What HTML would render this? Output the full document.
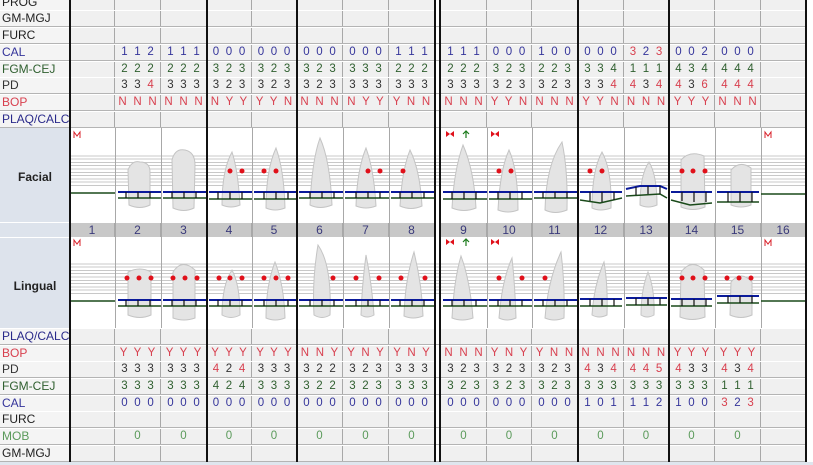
<!DOCTYPE html>
<html><head><meta charset="utf-8"><style>
*{margin:0;padding:0;box-sizing:border-box}
body{width:813px;height:465px;background:#fff;position:relative;overflow:hidden;font-family:"Liberation Sans",sans-serif;font-size:11.5px}
.r{position:absolute;left:0;width:806px;height:17px;display:flex;border-bottom:1px solid #b4b4b4;border-top:1px solid #fff}
.r>span{height:100%;background:#f0f0f0;border-right:1px solid #a8a8a8;display:block;text-align:center;white-space:pre;word-spacing:3.5px;line-height:15px}
.r>span:nth-child(1){width:70px;background:#f4f4f4;text-align:left;padding-left:2px;font-size:12px;border-right:none;word-spacing:0;overflow:visible}
.r>span:nth-child(2),.r>span:nth-child(5),.r>span:nth-child(6),.r>span:nth-child(12),.r>span:nth-child(15),.r>span:nth-child(18){width:45px}
.r>span:nth-child(3),.r>span:nth-child(4),.r>span:nth-child(7),.r>span:nth-child(8),.r>span:nth-child(9),.r>span:nth-child(11),.r>span:nth-child(13),.r>span:nth-child(14),.r>span:nth-child(16),.r>span:nth-child(17){width:46px}
.r>span:nth-child(10){width:6px;padding:0;background:#fff;border:none}
.b{color:#34349a}.g{color:#2f5f2f}.k{color:#333}.rd{color:#d8404f}.lg{color:#5a9a5a}
b{font-weight:normal}
.vl{position:absolute;top:0;height:462px;width:2px;background:#111}
.tl{position:absolute;top:0;height:462px;width:1px;background:#a8a8a8}
.n>span:not(:first-child):not(:nth-child(10)){background:#c8c8c8;color:#3a3a7a;font-size:12px}
</style></head><body>
<div style="position:absolute;left:0;top:128px;width:70px;height:200px;background:#dde3ec"></div>
<div style="position:absolute;left:0;top:163px;width:70px;text-align:center;font-weight:bold;font-size:12px;color:#222;line-height:28px">Facial</div>
<div style="position:absolute;left:0;top:272px;width:70px;text-align:center;font-weight:bold;font-size:12px;color:#222;line-height:28px">Lingual</div>
<div style="position:absolute;left:70px;top:153px;width:736px;height:35px;background:repeating-linear-gradient(#fff 0,#fff 2.3px,#c8c8c8 2.3px,#c8c8c8 3.3px)"></div>
<div style="position:absolute;left:70px;top:261px;width:736px;height:35px;background:repeating-linear-gradient(#fff 0,#fff 2.3px,#c8c8c8 2.3px,#c8c8c8 3.3px)"></div>
<div class="r n" style="top:222px;height:16px;border-color:#fff"><span style="background:#dde3ec"></span><span>1</span><span>2</span><span>3</span><span>4</span><span>5</span><span>6</span><span>7</span><span>8</span><span></span><span>9</span><span>10</span><span>11</span><span>12</span><span>13</span><span>14</span><span>15</span><span>16</span></div>

<div class="r" style="top:-6px"><span style="color:#222">PROG</span><span></span><span></span><span></span><span></span><span></span><span></span><span></span><span></span><span></span><span></span><span></span><span></span><span></span><span></span><span></span><span></span><span></span></div>
<div class="r" style="top:10px"><span style="color:#222">GM-MGJ</span><span></span><span></span><span></span><span></span><span></span><span></span><span></span><span></span><span></span><span></span><span></span><span></span><span></span><span></span><span></span><span></span><span></span></div>
<div class="r" style="top:27px"><span style="color:#222">FURC</span><span></span><span></span><span></span><span></span><span></span><span></span><span></span><span></span><span></span><span></span><span></span><span></span><span></span><span></span><span></span><span></span><span></span></div>
<div class="r b" style="top:44px"><span>CAL</span><span></span><span>1 1 2</span><span>1 1 1</span><span>0 0 0</span><span>0 0 0</span><span>0 0 0</span><span>0 0 0</span><span>1 1 1</span><span></span><span>1 1 1</span><span>0 0 0</span><span>1 0 0</span><span>0 0 0</span><span><b class="rd">3</b> 2 <b class="rd">3</b></span><span>0 0 2</span><span>0 0 0</span><span></span></div>
<div class="r g" style="top:61px"><span>FGM-CEJ</span><span></span><span>2 2 2</span><span>2 2 2</span><span>3 2 3</span><span>3 2 3</span><span>3 2 3</span><span>3 3 3</span><span>2 2 2</span><span></span><span>2 2 2</span><span>3 2 3</span><span>2 2 3</span><span>3 3 4</span><span>1 1 1</span><span>4 3 4</span><span>4 4 4</span><span></span></div>
<div class="r k" style="top:77px"><span>PD</span><span></span><span>3 3 <b class="rd">4</b></span><span>3 3 3</span><span>3 2 3</span><span>3 2 3</span><span>3 2 3</span><span>3 3 3</span><span>3 3 3</span><span></span><span>3 3 3</span><span>3 2 3</span><span>3 2 3</span><span>3 3 <b class="rd">4</b></span><span class="rd">4 <b class="k">3</b> 4</span><span class="rd">4 <b class="k">3</b> 6</span><span class="rd">4 4 4</span><span></span></div>
<div class="r rd" style="top:94px"><span>BOP</span><span></span><span>N N N</span><span>N N N</span><span>N Y Y</span><span>Y Y N</span><span>N N N</span><span>N Y Y</span><span>Y N N</span><span></span><span>N N N</span><span>Y Y N</span><span>N N N</span><span>Y Y N</span><span>N N N</span><span>Y Y Y</span><span>N N N</span><span></span></div>
<div class="r" style="top:111px;color:#2a2a8a"><span>PLAQ/CALC</span><span></span><span></span><span></span><span></span><span></span><span></span><span></span><span></span><span></span><span></span><span></span><span></span><span></span><span></span><span></span><span></span><span></span></div>

<div class="r" style="top:328px;color:#2a2a8a"><span>PLAQ/CALC</span><span></span><span></span><span></span><span></span><span></span><span></span><span></span><span></span><span></span><span></span><span></span><span></span><span></span><span></span><span></span><span></span><span></span></div>
<div class="r rd" style="top:345px"><span>BOP</span><span></span><span>Y Y Y</span><span>Y Y Y</span><span>Y Y Y</span><span>Y Y Y</span><span>N N Y</span><span>Y N Y</span><span>Y N Y</span><span></span><span>N N N</span><span>Y N Y</span><span>Y N N</span><span>N N N</span><span>N N N</span><span>Y Y Y</span><span>Y Y Y</span><span></span></div>
<div class="r k" style="top:361px"><span>PD</span><span></span><span>3 3 3</span><span>3 3 3</span><span><b class="rd">4</b> 2 <b class="rd">4</b></span><span>3 3 3</span><span>3 2 2</span><span>3 2 3</span><span>3 3 3</span><span></span><span>3 2 3</span><span>3 2 3</span><span>3 2 3</span><span class="rd">4 <b class="k">3</b> 4</span><span class="rd">4 4 5</span><span><b class="rd">4</b> 3 3</span><span class="rd">4 <b class="k">3</b> 4</span><span></span></div>
<div class="r g" style="top:378px"><span>FGM-CEJ</span><span></span><span>3 3 3</span><span>3 3 3</span><span>4 2 4</span><span>3 3 3</span><span>3 2 2</span><span>3 2 3</span><span>3 3 3</span><span></span><span>3 2 3</span><span>3 2 3</span><span>3 2 3</span><span>3 3 3</span><span>3 3 3</span><span>3 3 3</span><span>1 1 1</span><span></span></div>
<div class="r b" style="top:395px"><span>CAL</span><span></span><span>0 0 0</span><span>0 0 0</span><span>0 0 0</span><span>0 0 0</span><span>0 0 0</span><span>0 0 0</span><span>0 0 0</span><span></span><span>0 0 0</span><span>0 0 0</span><span>0 0 0</span><span>1 0 1</span><span>1 1 2</span><span>1 0 0</span><span><b class="rd">3</b> 2 <b class="rd">3</b></span><span></span></div>
<div class="r" style="top:411px"><span style="color:#222">FURC</span><span></span><span></span><span></span><span></span><span></span><span></span><span></span><span></span><span></span><span></span><span></span><span></span><span></span><span></span><span></span><span></span><span></span></div>
<div class="r lg" style="top:428px"><span>MOB</span><span></span><span>0</span><span>0</span><span>0</span><span>0</span><span>0</span><span>0</span><span>0</span><span></span><span>0</span><span>0</span><span>0</span><span>0</span><span>0</span><span>0</span><span>0</span><span></span></div>
<div class="r" style="top:445px"><span style="color:#222">GM-MGJ</span><span></span><span></span><span></span><span></span><span></span><span></span><span></span><span></span><span></span><span></span><span></span><span></span><span></span><span></span><span></span><span></span><span></span></div>
<div style="position:absolute;left:0;top:462px;width:813px;height:3px;background:#dfe6ee"></div>

<div style="position:absolute;top:128px;left:0;width:813px;height:200px;pointer-events:none">
<div class="tl" style="left:115px;height:200px"></div><div class="tl" style="left:161px;height:200px"></div><div class="tl" style="left:252px;height:200px"></div><div class="tl" style="left:343px;height:200px"></div><div class="tl" style="left:389px;height:200px"></div><div class="tl" style="left:487px;height:200px"></div><div class="tl" style="left:532px;height:200px"></div><div class="tl" style="left:624px;height:200px"></div><div class="tl" style="left:715px;height:200px"></div><div class="tl" style="left:761px;height:200px"></div>
</div>

<svg width="813" height="465" style="position:absolute;left:0;top:0">
<g fill="#e4e4e4" stroke="#c4c4c4" stroke-width="1">
<path d="M129 205 L128 170 Q132 160 140 162 Q150 162 150 172 L150 205 Q140 210 129 205Z"/>
<path d="M173 208 L172 160 Q175 148 185 150 Q195 152 195 165 L194 208 Q184 213 173 208Z"/>
<path d="M222 205 Q222 170 232 152 Q238 170 240 205 Q231 209 222 205Z"/>
<path d="M266 208 Q266 170 276 148 Q284 170 285 208 Q275 212 266 208Z"/>
<path d="M310 205 Q312 160 320 138 Q330 160 332 205 Q320 210 310 205Z"/>
<path d="M356 206 Q357 170 366 148 Q374 170 376 206 Q366 210 356 206Z"/>
<path d="M400 206 Q402 170 410 150 Q420 170 422 206 Q411 211 400 206Z"/>
<path d="M452 208 Q454 170 463 145 Q474 170 476 208 Q464 213 452 208Z"/>
<path d="M498 210 Q500 170 509 150 Q518 170 518 210 Q508 214 498 210Z"/>
<path d="M545 210 Q546 165 562 142 Q568 170 567 210 Q555 215 545 210Z"/>
<path d="M592 208 Q592 170 602 152 Q612 170 611 208 Q600 212 592 208Z"/>
<path d="M640 205 Q640 175 649 162 Q657 175 657 205 Q648 209 640 205Z"/>
<path d="M681 207 L681 160 Q690 150 704 156 L705 207 Q693 212 681 207Z"/>
<path d="M731 205 L731 170 Q740 160 751 168 L751 205 Q741 209 731 205Z"/>
<path d="M128 315 L128 272 Q140 266 151 272 L151 315 Q140 320 128 315Z"/>
<path d="M173 318 L173 272 Q182 258 195 270 L195 318 Q184 322 173 318Z"/>
<path d="M222 315 Q222 285 232 270 Q240 285 240 315 Q231 320 222 315Z"/>
<path d="M266 318 Q266 285 275 262 Q284 285 285 318 Q275 322 266 318Z"/>
<path d="M314 315 Q312 280 318 245 Q332 265 330 315 Q322 320 314 315Z"/>
<path d="M361 315 Q362 285 366 255 Q372 285 374 315 Q367 319 361 315Z"/>
<path d="M404 316 Q405 280 414 252 Q422 285 423 316 Q413 320 404 316Z"/>
<path d="M452 318 Q454 280 461 256 Q470 280 473 318 Q462 322 452 318Z"/>
<path d="M499 318 Q502 280 512 258 Q515 285 516 318 Q507 322 499 318Z"/>
<path d="M545 318 Q548 280 561 252 Q565 285 564 318 Q554 322 545 318Z"/>
<path d="M592 315 Q594 285 604 262 Q608 285 607 315 Q599 319 592 315Z"/>
<path d="M641 315 Q641 290 648 272 Q655 290 654 315 Q647 319 641 315Z"/>
<path d="M680 317 L681 272 Q692 258 704 270 L705 317 Q692 322 680 317Z"/>
<path d="M730 315 L731 282 Q741 270 752 282 L752 315 Q741 320 730 315Z"/>
</g>
<g stroke="#0a1a9a" stroke-width="2" fill="none">
<path d="M118 192H161 M163 192H207 M209 192H252 M254 192H297 M299 192H343 M345 192H389 M391 192H435 M443 192H487 M489 192H532 M534 192H578 M580 192H622 M626 189L640 186 L660 186 L667 189 M671 192H712 M717 192H759"/>
<path d="M118 300H161 M163 300H207 M209 300H252 M254 300H297 M299 300H343 M345 300H389 M391 300H435 M443 300H487 M489 300H532 M534 300H578 M580 299H622 M626 298H667 M671 299H712 M717 296H759"/>
</g>
<g stroke="#1a4a1a" stroke-width="1.5" fill="none">
<path d="M70 193H115 M761 194H806 M70 301H115 M761 301H806"/>
<path d="M118 198H161 M163 198H207 M209 199H252 M254 199H297 M299 198H343 M345 198H389 M391 198H435 M443 199H487 M489 199H532 M534 198H578 M580 200L600 203 L622 198 M626 196L660 194 L667 198 M671 200L690 205 L712 203 M717 202H759"/>
<path d="M118 306H161 M163 306H207 M209 306H252 M254 306H297 M299 306H343 M345 306H389 M391 306H435 M443 306H487 M489 306H532 M534 306H578 M580 306H622 M626 305H667 M671 306H712 M717 303H759"/>
</g>
<g stroke="#111" stroke-width="1.2">
<path d="M126 192v6M138 192v6M150 192v6M172 192v6M184 192v6M196 192v6M218 192v7M230 192v7M242 192v7M264 192v7M276 192v7M288 192v7M310 192v6M322 192v6M334 192v6M356 192v6M368 192v6M380 192v6M400 192v6M412 192v6M424 192v6M452 192v7M464 192v7M476 192v7M498 192v7M510 192v7M522 192v7M543 192v6M555 192v6M567 192v6M590 192v9M602 192v10M614 192v8M636 187v8M648 186v8M660 186v8M682 192v9M694 192v10M706 192v10M728 192v10M740 192v10M752 192v10"/>
<path d="M126 300v6M138 300v6M150 300v6M172 300v6M184 300v6M196 300v6M218 300v6M230 300v6M242 300v6M264 300v6M276 300v6M288 300v6M310 300v6M322 300v6M334 300v6M356 300v6M368 300v6M380 300v6M400 300v6M412 300v6M424 300v6M452 300v6M464 300v6M476 300v6M498 300v6M510 300v6M522 300v6M543 300v6M555 300v6M567 300v6M590 299v7M602 299v7M614 299v7M636 298v7M648 298v7M660 298v7M682 299v7M694 299v7M706 299v7M728 296v7M740 296v7M752 296v7"/>
</g>
<g fill="#e0101a">
<circle cx="230" cy="171" r="2.5"/><circle cx="242" cy="171" r="2.5"/>
<circle cx="264" cy="171" r="2.5"/><circle cx="276" cy="171" r="2.5"/>
<circle cx="368" cy="171" r="2.5"/><circle cx="380" cy="171" r="2.5"/>
<circle cx="403" cy="171" r="2.5"/>
<circle cx="499" cy="171" r="2.5"/><circle cx="511" cy="171" r="2.5"/>
<circle cx="590" cy="171" r="2.5"/><circle cx="602" cy="171" r="2.5"/>
<circle cx="682" cy="171" r="2.5"/><circle cx="693" cy="171" r="2.5"/><circle cx="705" cy="171" r="2.5"/>
<circle cx="127" cy="278" r="2.5"/><circle cx="139" cy="278" r="2.5"/><circle cx="151" cy="278" r="2.5"/>
<circle cx="173" cy="278" r="2.5"/><circle cx="185" cy="278" r="2.5"/><circle cx="197" cy="278" r="2.5"/>
<circle cx="219" cy="278" r="2.5"/><circle cx="230" cy="278" r="2.5"/><circle cx="242" cy="278" r="2.5"/>
<circle cx="264" cy="278" r="2.5"/><circle cx="276" cy="278" r="2.5"/><circle cx="288" cy="278" r="2.5"/>
<circle cx="333" cy="278" r="2.5"/>
<circle cx="356" cy="278" r="2.5"/><circle cx="379" cy="278" r="2.5"/>
<circle cx="401" cy="278" r="2.5"/><circle cx="425" cy="278" r="2.5"/>
<circle cx="499" cy="278" r="2.5"/><circle cx="522" cy="278" r="2.5"/>
<circle cx="545" cy="278" r="2.5"/>
<circle cx="682" cy="278" r="2.5"/><circle cx="693" cy="278" r="2.5"/><circle cx="705" cy="278" r="2.5"/>
<circle cx="727" cy="278" r="2.5"/><circle cx="739" cy="278" r="2.5"/><circle cx="751" cy="278" r="2.5"/>
<path d="M446 131l4 3l-4 3zM454 131l-4 3l4 3zM446 239l4 3l-4 3zM454 239l-4 3l4 3zM491 131l4 3l-4 3zM499 131l-4 3l4 3zM491 239l4 3l-4 3zM499 239l-4 3l4 3z"/>
</g>
<g stroke="#1a7a1a" stroke-width="1.2" fill="none"><path d="M466 138v-7M463 134l3-3l3 3M466 246v-7M463 242l3-3l3 3"/></g>
<g stroke="#d8202a" stroke-width="1" fill="none"><path d="M74 138v-6l3 4l3-4v6M74 246v-6l3 4l3-4v6M765 138v-6l3 4l3-4v6M765 246v-6l3 4l3-4v6"/></g>
</svg>

<div class="vl" style="left:69px"></div>
<div class="vl" style="left:206px"></div>
<div class="vl" style="left:296px"></div>
<div class="vl" style="left:434px"></div>
<div class="vl" style="left:439px"></div>
<div class="vl" style="left:577px"></div>
<div class="vl" style="left:668px"></div>
<div class="vl" style="left:805px"></div>
</body></html>
